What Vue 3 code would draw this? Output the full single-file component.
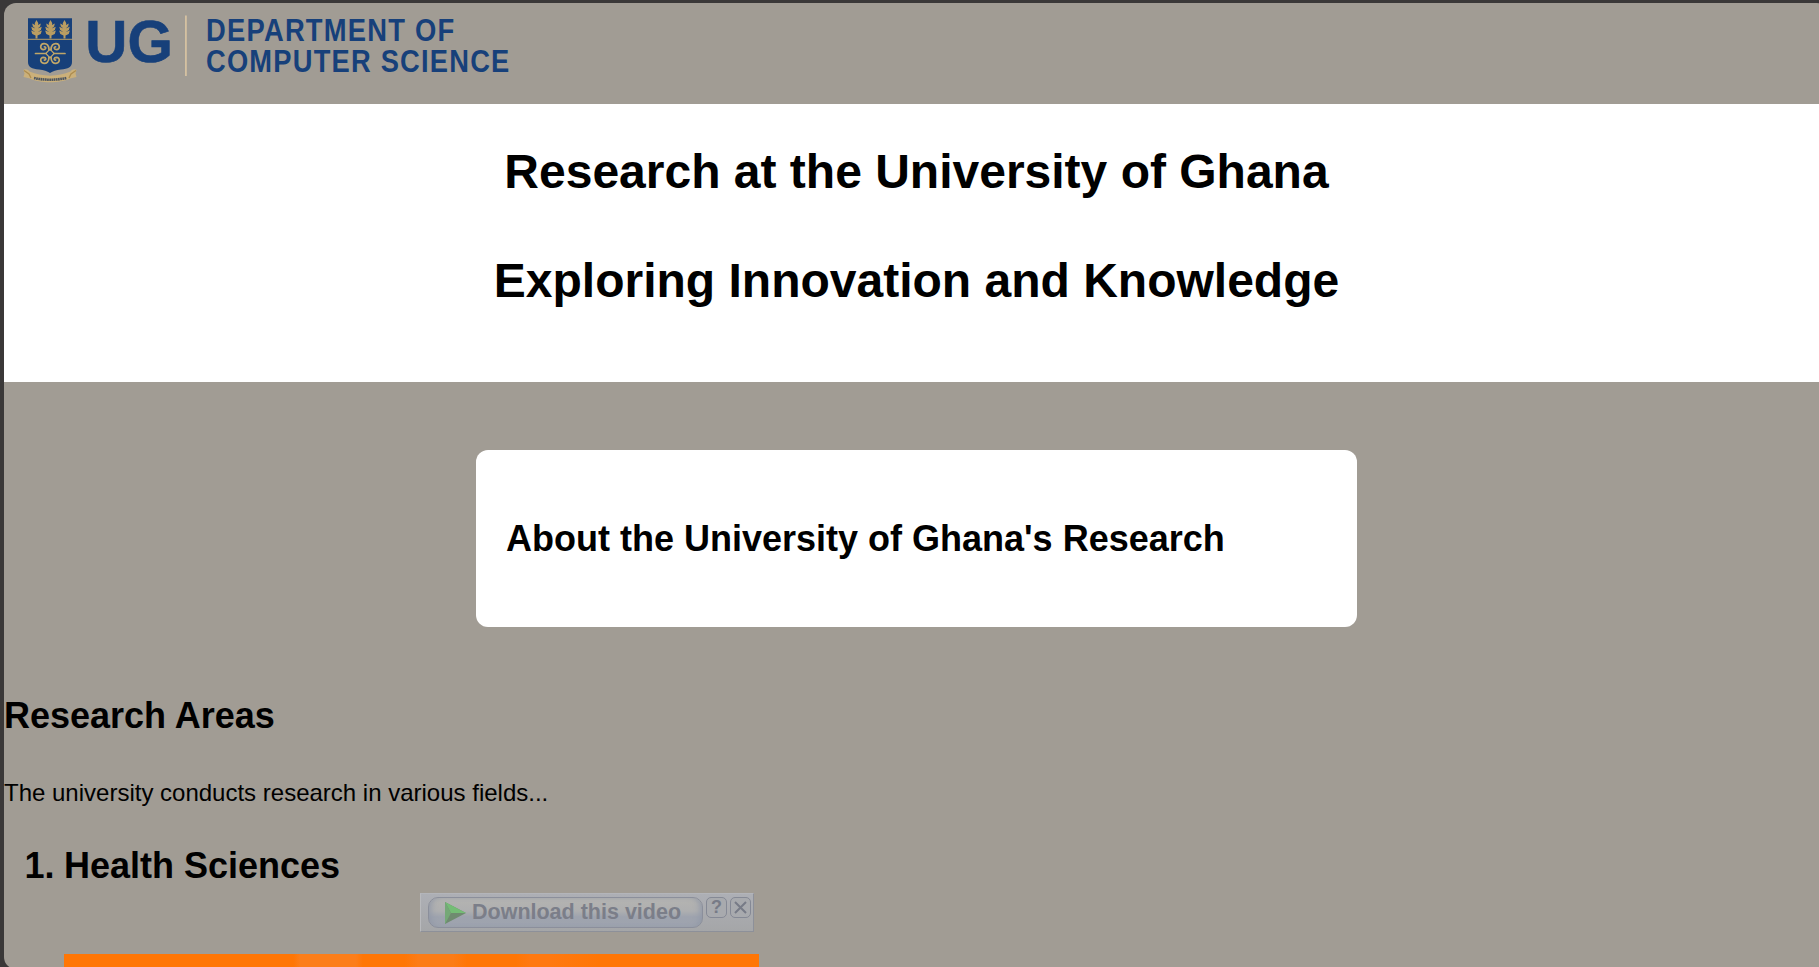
<script setup>
const headings = ['Research at the University of Ghana', 'Exploring Innovation and Knowledge']
const trees = [36.5, 50.5, 64.5]
</script>

<template>
  <div class="window">
    <div class="page">
      <header class="site-header">
        <svg class="logo" viewBox="4 3 520 100" role="img" aria-label="UG Department of Computer Science">
          <path d="M28 18.3H72V62C72 67.5 68 68.6 61 69.6C56 70.4 53 71 50 73C47 71 44 70.4 39 69.6C32 68.6 28 67.5 28 62Z" fill="#17407a" />
          <path d="M28 39.3H72" stroke="#b99f68" stroke-width="1" />
          <g v-for="x in trees" :key="x" :transform="`translate(${x} 20)`">
            <path
              d="M0 0L1.8 3.2L1.4 5L4.3 3.6L3.6 6.6L1.2 8.6L5.2 6.8L4.4 10L1.2 12L5.4 10.6L4.2 14L1 15.4V18.6H-1V15.4L-4.2 14L-5.4 10.6L-1.2 12L-4.4 10L-5.2 6.8L-1.2 8.6L-3.6 6.6L-4.3 3.6L-1.4 5L-1.8 3.2Z"
              fill="#b99d62"
            />
          </g>
          <g fill="none" stroke="#c0a668" stroke-width="1.7" stroke-linecap="round">
            <path d="M35.5 53.5H46M54 53.5H65" />
            <path d="M50 49.2L54.2 53.5L50 57.8L45.8 53.5Z" stroke-width="1.2" />
            <path d="M49 50C49 45 46.5 43.5 44 43.6C40 43.8 39.4 49.4 43.6 49.6C46.3 49.6 46.4 46.8 44.4 46.8" />
            <path d="M51 50C51 45 53.5 43.5 56 43.6C60 43.8 60.6 49.4 56.4 49.6C53.7 49.6 53.6 46.8 55.6 46.8" />
            <path d="M49 57C49 62 46.5 63.4 44 63.3C40 63.1 39.4 57.5 43.6 57.3C46.3 57.3 46.4 60.1 44.4 60.1" />
            <path d="M51 57C51 62 53.5 63.4 56 63.3C60 63.1 60.6 57.5 56.4 57.3C53.7 57.3 53.6 60.1 55.6 60.1" />
          </g>
          <path d="M23.5 70C25 68.5 28 69.5 29.5 71.5C42 77 58 77 70.5 71.5C72 69.5 75 68.5 76.5 70L75.6 73.5L76.5 77L70 78.5C60 83.5 40 83.5 30 78.5L23.5 77L24.5 73.5Z" fill="#cbb07a" />
          <path d="M24 70.5L29 74L31 78M76 70.5L71 74L69 78" fill="none" stroke="#ad8c4e" stroke-width="1.3" />
          <path d="M34 78Q50 81.5 66.5 78" fill="none" stroke="#4e5660" stroke-width="2.6" stroke-dasharray="1.7 .5" />
          <text class="initials" x="85.3" y="62.2" textLength="87.5" lengthAdjust="spacingAndGlyphs">UG</text>
          <rect x="185" y="15.5" width="1.8" height="60.5" fill="#d5c1a1" />
          <text class="name" x="206" y="40.7" textLength="249.5" lengthAdjust="spacingAndGlyphs">DEPARTMENT OF</text>
          <text class="name" x="206" y="72" textLength="304.5" lengthAdjust="spacingAndGlyphs">COMPUTER SCIENCE</text>
        </svg>
      </header>

      <section class="hero">
        <h1 v-for="text in headings" :key="text">{{ text }}</h1>
      </section>

      <section class="about">
        <h2>About the University of Ghana's Research</h2>
      </section>

      <section class="areas">
        <h2>Research Areas</h2>
        <p>The university conducts research in various fields...</p>
        <ol>
          <li>
            <h2><span class="marker">1.</span>Health Sciences</h2>
            <div class="download-bar">
              <div class="download">
                <svg class="play" viewBox="0 0 21 22">
                  <path d="M0 0L21 11L0 22Z" fill="#6f8b70" />
                  <path d="M0 0L21 11L6 11Z" fill="#74bd75" />
                  <path d="M0 0L6 11L0 22Z" fill="#75a877" />
                </svg>
                <span>Download this video</span>
              </div>
              <div class="tool">?</div>
              <div class="tool">
                <svg viewBox="0 0 19 19"><path d="M4 4L15 15M15 4L4 15" stroke="#777b87" stroke-width="2" /></svg>
              </div>
            </div>
            <div class="video"></div>
          </li>
        </ol>
      </section>
    </div>
  </div>
</template>

<style>
body {
  overflow: hidden;
  background: #3a3838;
}
</style>

<style scoped>
.window {
  box-sizing: border-box;
  width: 1819px;
  height: 967px;
  padding: 3px 0 0 4px;
  overflow: hidden;
  background: #3a3838;
  font-family: "Liberation Sans", Arial, sans-serif;
  color: #000;
}
.page {
  width: 1825px;
  height: 966px;
  overflow: hidden;
  background: #a19c94;
  border-radius: 12px;
}
.site-header {
  height: 101px;
}
.logo {
  display: block;
  width: 520px;
  height: 100px;
  overflow: visible;
  fill: #17407a;
}
.initials {
  font-size: 60px;
  font-weight: 700;
  stroke: #17407a;
  stroke-width: 0.6px;
}
.name {
  font-size: 31px;
  font-weight: 700;
  letter-spacing: 1.4px;
}
h1,
h2,
p,
ol {
  margin: 0;
}
.hero {
  box-sizing: border-box;
  height: 278px;
  padding-top: 40px;
  display: flex;
  flex-direction: column;
  gap: 54px;
  text-align: center;
  background: #fff;
}
h1 {
  font-size: 48px;
  line-height: 55px;
}
h2 {
  font-size: 36px;
  line-height: 42px;
}
.about {
  box-sizing: border-box;
  width: 881px;
  height: 177px;
  margin: 68px auto 0;
  padding: 68px 30px 67px;
  border-radius: 12px;
  background: #fff;
}
.areas {
  padding-top: 68px;
}
p {
  margin-top: 42px;
  font-size: 24px;
  line-height: 28px;
}
ol {
  margin-top: 38px;
  padding-left: 60px;
  list-style: none;
}
.marker {
  display: inline-block;
  width: 39.5px;
  margin-left: -39.5px;
}
.download-bar {
  box-sizing: border-box;
  display: flex;
  gap: 3px;
  width: 334px;
  height: 39px;
  margin: 6px 0 0 356px;
  padding: 3px 2px 0 7px;
  border: 1px solid #8d9099;
  border-top-color: #b3b5ba;
  border-left-color: #b9babd;
  background: linear-gradient(#adafb5, #a5a6a8);
}
.download {
  box-sizing: border-box;
  display: flex;
  align-items: center;
  gap: 6px;
  width: 275px;
  height: 31px;
  padding-left: 16px;
  border: 1px solid #8b8f9b;
  border-radius: 10px;
  background: linear-gradient(#b5b4b1, #aeafb0 45%, #9ea3ae 65%, #9fa4ae);
  box-shadow: inset 5px 0 6px -3px #9299a8, inset -5px 0 6px -3px #9299a8;
  color: #7b7e89;
  font-size: 21.5px;
  font-weight: 700;
  line-height: 26px;
  white-space: nowrap;
}
.download span {
  margin-top: -2px;
}
.play {
  width: 21px;
  height: 22px;
}
.tool {
  box-sizing: border-box;
  width: 21px;
  height: 21px;
  border: 1px solid #858995;
  border-radius: 5px;
  background: #a8aaae;
  color: #777b87;
  font-size: 18px;
  font-weight: 700;
  line-height: 19px;
  text-align: center;
}
.tool svg {
  display: block;
  width: 19px;
  height: 19px;
}
.video {
  width: 695px;
  height: 360px;
  margin-top: 22px;
  background: linear-gradient(90deg, #ff7605 0 33%, #fc7e1a 34% 42%, #ff7605 43% 49%, #fc7c16 51% 56%, #ff7605 58% 65%, #ff7910 67% 70%, #ff7605 77%);
}
</style>
